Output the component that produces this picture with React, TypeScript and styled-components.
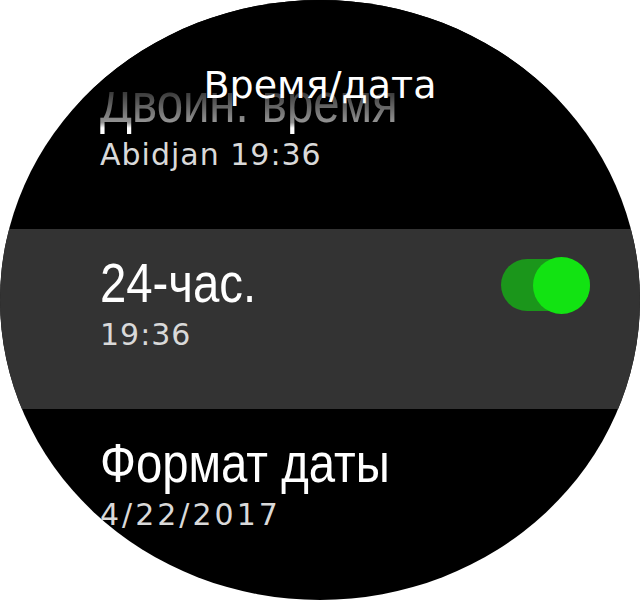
import React from 'react';
import styled, { createGlobalStyle } from 'styled-components';

const GlobalStyle = createGlobalStyle`
  html, body {
    margin: 0;
    padding: 0;
    background: #ffffff;
  }
`;

const Screen = styled.div`
  position: relative;
  width: 640px;
  height: 600px;
  border-radius: 50%;
  overflow: hidden;
  background: #000000;
`;

const Header = styled.div`
  position: absolute;
  top: 0;
  left: 0;
  right: 0;
  height: 92px;
  background: #000000;
  z-index: 2;

  &::after {
    content: '';
    position: absolute;
    left: 0;
    right: 0;
    top: 92px;
    height: 36px;
    background: linear-gradient(
      to bottom,
      rgba(0, 0, 0, 0.78),
      rgba(0, 0, 0, 0.42) 85%,
      rgba(0, 0, 0, 0)
    );
  }
`;

const Title = styled.div`
  position: relative;
  z-index: 1;
  padding-top: 66px;
  text-align: center;
  font-family: 'DejaVu Sans', sans-serif;
  font-size: 38px;
  line-height: 38px;
  color: #ffffff;
`;

const List = styled.div`
  display: flex;
  flex-direction: column;
  padding-top: 49px;
`;

const Row = styled.div<{ $active?: boolean }>`
  display: flex;
  align-items: flex-start;
  height: 180px;
  box-sizing: border-box;
  padding: 27px 50px 0 100px;
  background: ${(p) => (p.$active ? '#333333' : 'transparent')};
`;

const Texts = styled.div`
  display: flex;
  flex-direction: column;
  align-items: flex-start;
  gap: 9px;
  flex: 1;
`;

const Label = styled.div`
  font-family: 'Liberation Sans', Arial, sans-serif;
  font-size: 55px;
  line-height: 55px;
  color: #ffffff;
  white-space: nowrap;
  transform: scaleX(0.86);
  transform-origin: left center;
`;

const Value = styled.div<{ $spaced?: boolean }>`
  font-family: 'DejaVu Sans', sans-serif;
  font-size: 30px;
  line-height: 29px;
  color: #d9d9d9;
  letter-spacing: ${(p) => (p.$spaced ? '3px' : '1px')};
  white-space: nowrap;
`;

const Track = styled.div`
  display: flex;
  align-items: center;
  justify-content: flex-end;
  width: 89px;
  height: 52px;
  margin-top: 3px;
  border-radius: 26px;
  background: #1b961b;
`;

const Thumb = styled.div`
  width: 57px;
  height: 57px;
  margin: -3px 0;
  border-radius: 50%;
  background: #12e312;
`;

const Toggle = ({ on }: { on: boolean }) => (
  <Track aria-checked={on} role="switch">
    <Thumb />
  </Track>
);

const items = [
  { label: 'Двойн. время', value: 'Abidjan 19:36' },
  { label: '24-час.', value: '19:36', toggle: true, active: true },
  { label: 'Формат даты', value: '4/22/2017', spaced: true },
];

export default function App() {
  return (
    <>
      <GlobalStyle />
      <Screen>
        <Header>
          <Title>Время/дата</Title>
        </Header>
        <List>
          {items.map((item) => (
            <Row key={item.label} $active={item.active}>
              <Texts>
                <Label>{item.label}</Label>
                <Value $spaced={item.spaced}>{item.value}</Value>
              </Texts>
              {item.toggle && <Toggle on />}
            </Row>
          ))}
        </List>
      </Screen>
    </>
  );
}
